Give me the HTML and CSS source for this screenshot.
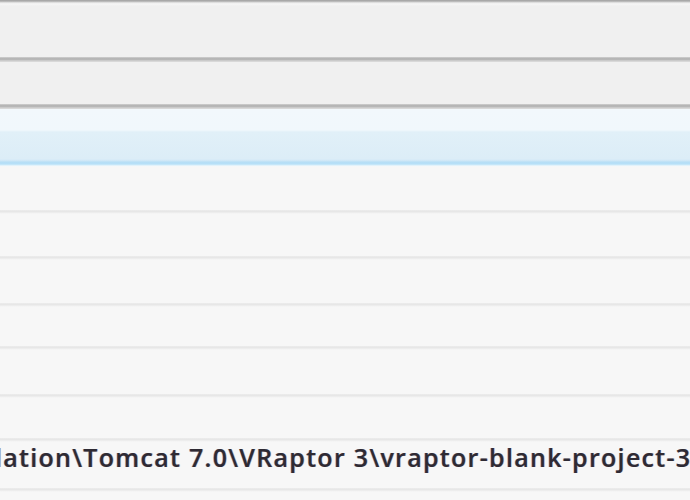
FILE: index.html
```html
<!DOCTYPE html>
<html>
<head>
<meta charset="utf-8">
<link rel="stylesheet" href="styles.css">
</head>
<body>
<div class="window">
  <div class="band band-top"></div>
  <div class="sep-dark"></div>
  <div class="band band-mid"></div>
  <div class="sep-dark"></div>
  <div class="list">
    <div class="row selected"></div>
    <div class="row"></div>
    <div class="row line"></div>
    <div class="row line"></div>
    <div class="row line"></div>
    <div class="row line"></div>
    <div class="row line"></div>
    <div class="row line text-row"><span class="path">lation\Tomcat 7.0\VRaptor 3\vraptor-blank-project-3</span></div>
    <div class="row line"></div>
  </div>
</div>
</body>
</html>
```
FILE: styles.css
```css
html, body {
  margin: 0;
  padding: 0;
  background: #f7f7f7;
  overflow: hidden;
}
.window {
  width: 690px;
  height: 500px;
  display: flex;
  flex-direction: column;
  overflow: hidden;
}
.band {
  background: #f0f0f0;
  flex: none;
}
.band-top {
  height: 57px;
  background: linear-gradient(to bottom, #a8a8a8 0, #a8a8a8 1px, #cfcfcf 2px, #ececec 3px, #f6f6f6 4px, #f0f0f0 6px);
}
.band-mid {
  height: 42px;
}
.sep-dark {
  flex: none;
  height: 5px;
  background: linear-gradient(to bottom, #d6d6d6 0, #b9b9b9 1px, #b2b2b2 2px, #bcbcbc 3px, #d8d8d8 4px);
}
.list {
  display: grid;
  grid-template-rows: 58px 43px 46px 47px 43px 48px 44px 50px 20px;
  flex: none;
}
.row {
  background: #f7f7f7;
}
.selected {
  background: linear-gradient(to bottom, #f2f8fc 0, #f1f8fc 21px, #e1f0f8 23px, #dcedf7 50px, #cbe6f6 52px, #b6def6 53px, #b6e0f8 55px, #d2ecfa 56px, #f2f8fb 57px, #f7f7f7 58px);
}
.line {
  background: linear-gradient(to bottom, #efefef 0, #e6e6e6 1px, #e8e8e8 2px, #f2f2f2 3px, #f7f7f7 4px);
}
.text-row {
  padding-top: 4px;
  box-sizing: border-box;
  white-space: nowrap;
  overflow: hidden;
}
.path {
  display: block;
  margin-left: -5px;
  font-family: "Open Sans", "Noto Sans", sans-serif;
  font-size: 25px;
  font-weight: 600;
  line-height: 30px;
  letter-spacing: 1.3px;
  color: #2e2a33;
  text-shadow: 0.7px 0 0.4px rgba(130, 70, 40, 0.35), -0.7px 0 0.4px rgba(40, 60, 150, 0.35);
}
```
